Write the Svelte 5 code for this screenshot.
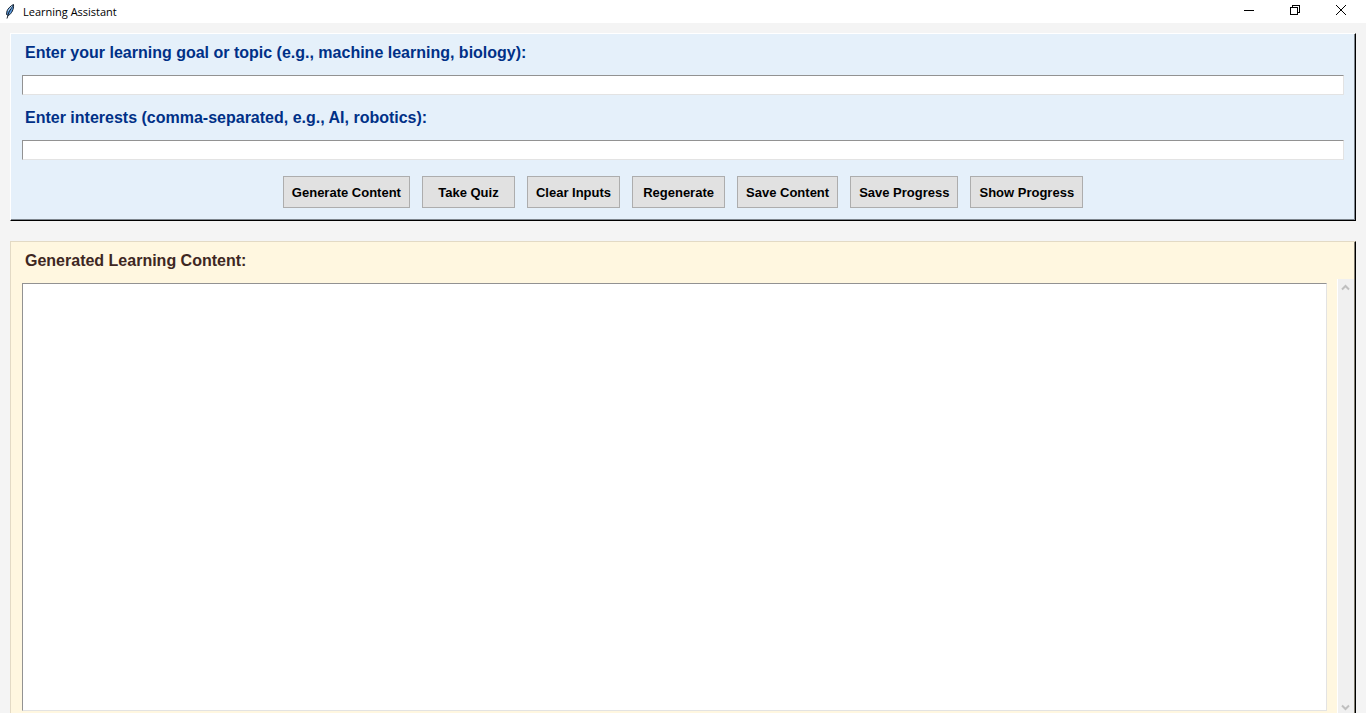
<script>
  let goal = $state('');
  let interests = $state('');
  let content = $state('');

  const actions = [
    'Generate Content',
    'Take Quiz',
    'Clear Inputs',
    'Regenerate',
    'Save Content',
    'Save Progress',
    'Show Progress'
  ];

  function run(action) {
    if (action === 'Clear Inputs') {
      goal = '';
      interests = '';
    }
  }
</script>

<div class="window">
  <header class="titlebar">
    <svg class="feather" width="12" height="18" viewBox="0 0 12 18" aria-hidden="true">
      <path d="M9.500 1.500C7 2.500 4 5.500 3 8L2.500 11.500L4.500 12.500C7.500 10.500 10 6.500 9.500 1.500Z" fill="#5b9be0" stroke="#17202c" stroke-width="1" />
      <path d="M8.500 3L5 9L3 15.500" fill="none" stroke="#17202c" stroke-width="1" />
      <path d="M8 3L4 8" fill="none" stroke="#b7d8f7" stroke-width="1" />
    </svg>
    <h1>Learning Assistant</h1>
    <div class="controls">
      <button aria-label="Minimize">
        <svg width="12" height="12" viewBox="0 0 12 12" shape-rendering="crispEdges"><path d="M1 6.500H11" /></svg>
      </button>
      <button aria-label="Restore">
        <svg width="12" height="12" viewBox="0 0 12 12" shape-rendering="crispEdges">
          <path d="M1.500 3.500H8.500V10.500H1.500ZM3.500 3V1.500H10.500V8.500H9" />
        </svg>
      </button>
      <button aria-label="Close">
        <svg width="12" height="12" viewBox="0 0 12 12"><path d="M1 1L11 11M11 1L1 11" /></svg>
      </button>
    </div>
  </header>

  <main>
    <section class="panel inputs">
      <label for="goal">Enter your learning goal or topic (e.g., machine learning, biology):</label>
      <input id="goal" type="text" bind:value={goal} />
      <label for="interests">Enter interests (comma-separated, e.g., AI, robotics):</label>
      <input id="interests" type="text" bind:value={interests} />
      <div class="actions">
        {#each actions as action}
          <button onclick={() => run(action)}>{action}</button>
        {/each}
      </div>
    </section>

    <section class="panel output">
      <label for="content">Generated Learning Content:</label>
      <div class="viewer">
        <textarea id="content" bind:value={content}></textarea>
        <div class="scrollbar">
          <button aria-label="Scroll up">
            <svg width="9" height="7" viewBox="0 0 9 7"><path d="M1 5.500L4.500 2L8 5.500" /></svg>
          </button>
          <button aria-label="Scroll down">
            <svg width="9" height="7" viewBox="0 0 9 7"><path d="M1 1.500L4.500 5L8 1.500" /></svg>
          </button>
        </div>
      </div>
    </section>
  </main>
</div>

<style>
  :global(body) {
    margin: 0;
  }

  .window {
    display: flex;
    flex-direction: column;
    height: 100vh;
    overflow: hidden;
    background: #f4f4f4;
    font-family: "Liberation Sans", Arial, sans-serif;
  }

  .window *,
  .window {
    box-sizing: border-box;
  }

  button {
    border: 0;
    padding: 0;
    background: none;
    font: inherit;
  }

  svg {
    display: block;
  }

  .titlebar {
    display: flex;
    align-items: center;
    flex: none;
    height: 23px;
    padding: 0 2px 0 4px;
    background: #fff;
  }

  h1 {
    margin: 0 auto 0 7px;
    font: 400 11px/23px "Segoe UI", "Open Sans", sans-serif;
    color: #000;
  }

  .controls {
    display: flex;
    align-self: stretch;
  }

  .controls button {
    display: flex;
    justify-content: center;
    width: 46px;
    padding-top: 4px;
  }

  .controls path {
    fill: none;
    stroke: #000;
    stroke-width: 1;
  }

  main {
    display: flex;
    flex-direction: column;
    flex: 1;
    gap: 20px;
    min-height: 0;
    padding: 10px 10px 0;
  }

  .panel {
    display: flex;
    flex-direction: column;
    border-style: solid;
    border-width: 1px;
  }

  .inputs {
    flex: none;
    padding: 0 11px 12px;
    border-color: #fff #000 #000 #fff;
    background: #e5f0fa;
    box-shadow: inset -1px -1px #7d858d;
    color: #003087;
  }

  label {
    padding: 0 3px;
    font-size: 16px;
    font-weight: 700;
    line-height: 37px;
  }

  .inputs label {
    padding-bottom: 4px;
  }

  .inputs input + label {
    padding-top: 4px;
  }

  input,
  textarea {
    margin: 0;
    padding: 1px 2px;
    border: 1px solid;
    border-color: #929292 #e3e3e3 #e3e3e3 #929292;
    border-radius: 0;
    outline: none;
    background: #fff;
    font-family: inherit;
    font-size: 14px;
  }

  input {
    width: 100%;
    height: 20px;
  }

  .actions {
    display: flex;
    flex-wrap: wrap;
    justify-content: center;
    gap: 12px;
    padding-top: 16px;
  }

  .actions button {
    min-width: 93px;
    height: 32px;
    padding: 0 8px;
    border: 1px solid #adadad;
    background: #e1e1e1;
    color: #000;
    font-size: 13px;
    font-weight: 700;
  }

  .output {
    flex: 1;
    min-height: 0;
    border-color: #e3dac5 #000 #e3dac5 #e3dac5;
    border-bottom-width: 0;
    background: #fff7e0;
    box-shadow: inset -1px 0 #807c70;
    color: #3e2723;
  }

  .output label {
    padding-left: 14px;
  }

  .viewer {
    display: flex;
    flex: 1;
    gap: 10px;
    min-height: 0;
    padding: 0 1px 0 11px;
  }

  textarea {
    flex: 1;
    min-width: 0;
    margin: 4px 0 2px;
    resize: none;
  }

  .scrollbar {
    display: flex;
    flex-direction: column;
    justify-content: space-between;
    width: 17px;
    border-left: 1px solid #fff;
    background: #f0f0f0;
  }

  .scrollbar button {
    display: flex;
    align-items: center;
    justify-content: center;
    height: 16px;
    padding-right: 1px;
  }

  .scrollbar button:last-child {
    height: 12px;
  }

  .scrollbar path {
    fill: none;
    stroke: #bfbfbf;
    stroke-width: 2;
  }
</style>
